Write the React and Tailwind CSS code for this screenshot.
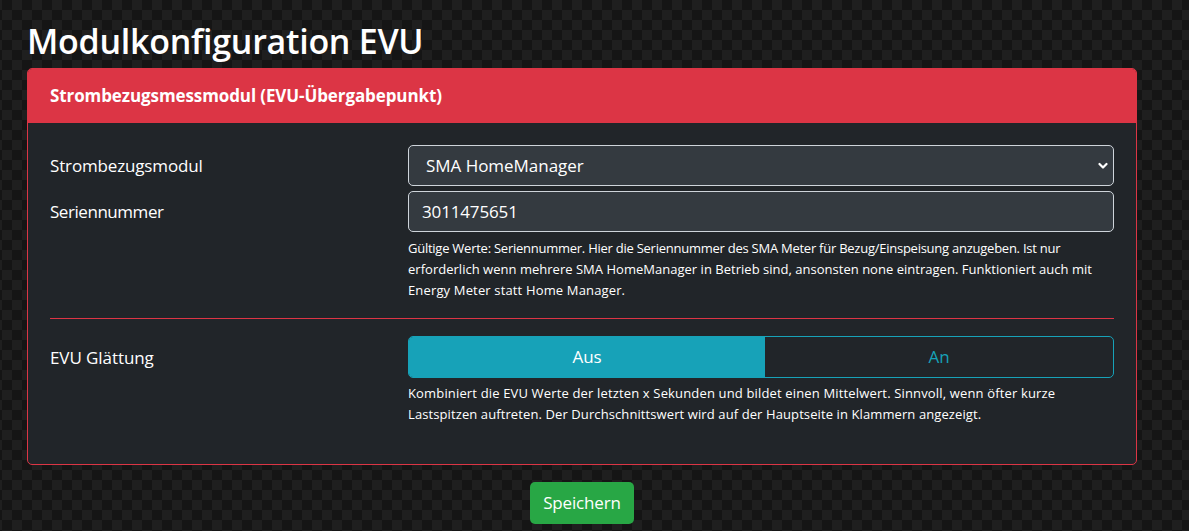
const FONT = "font-['Open_Sans','Noto_Sans',sans-serif]"

function Help({ lines, className }) {
  return (
    <p className={`text-[13px] leading-[21px] text-white ${className}`}>
      {lines.map(([text, cls]) => <span key={text} className={`block whitespace-nowrap ${cls}`}>{text}</span>)}
    </p>
  )
}

export default function App() {
  return (
    <div className={`${FONT} h-[531px] overflow-hidden bg-[conic-gradient(#151515_25%,#1f1f1f_0_50%,#151515_0_75%,#1f1f1f_0)] bg-[length:20px_20px] bg-[position:12px_0] px-[27px] text-white`}>
      <h1 className="pt-[19px] text-[34px] font-semibold leading-[45px] tracking-[-0.27px]">Modulkonfiguration EVU</h1>
      <section className="mt-[4px] w-[1110px] overflow-hidden rounded-[5px] border border-[#dc3545] bg-[#212529]">
        <header className="flex h-[54px] items-center bg-[#dc3545] px-[22px] text-[17px] font-bold tracking-[-0.1px]">
          Strombezugsmessmodul (EVU-Übergabepunkt)
        </header>
        <div className="px-[22px] pt-[22px] pb-[39px]">
          <div className="grid grid-cols-[358px_706px] gap-y-[5px] text-[17px] tracking-[-0.15px]">
            <label className="self-center">Strombezugsmodul</label>
            <div className="flex h-[41px] items-center justify-between rounded-[5px] border border-[#ced4da] bg-[#343a40] pr-[5px] pl-[17px]">
              <span className="tracking-[-0.03px]">SMA HomeManager</span>
              <svg width="10" height="8" viewBox="0 0 10 8" fill="none" stroke="white" strokeWidth="2.2" strokeLinecap="round" strokeLinejoin="round"><path d="M1.5 2l3.5 3.5L8.5 2" /></svg>
            </div>
            <label className="pt-[8px] tracking-[-0.45px]">Seriennummer</label>
            <div>
              <div className="flex h-[41px] items-center rounded-[5px] border border-[#ced4da] bg-[#343a40] px-[13px]">3011475651</div>
              <Help className="mt-[6px]" lines={[
                ['Gültige Werte: Seriennummer. Hier die Seriennummer des SMA Meter für Bezug/Einspeisung anzugeben. Ist nur', 'tracking-[-0.25px]'],
                ['erforderlich wenn mehrere SMA HomeManager in Betrieb sind, ansonsten none eintragen. Funktioniert auch mit', 'tracking-[0.02px]'],
                ['Energy Meter statt Home Manager.', 'tracking-[0.15px]'],
              ]} />
            </div>
          </div>
          <hr className="mt-[17px] mb-[17px] border-t border-[#dc3545]" />
          <div className="grid grid-cols-[358px_706px] text-[17px] tracking-[-0.15px]">
            <label className="pt-[9px] tracking-[-0.08px]">EVU Glättung</label>
            <div>
              <div className="flex h-[42px] overflow-hidden rounded-[5px] border border-[#17a2b8]">
                <div className="flex w-[356px] items-center justify-center bg-[#17a2b8]">Aus</div>
                <div className="flex flex-1 items-center justify-center text-[#17a2b8]">An</div>
              </div>
              <Help className="mt-[5px]" lines={[
                ['Kombiniert die EVU Werte der letzten x Sekunden und bildet einen Mittelwert. Sinnvoll, wenn öfter kurze', 'tracking-[0.155px]'],
                ['Lastspitzen auftreten. Der Durchschnittswert wird auf der Hauptseite in Klammern angezeigt.', 'tracking-[0.1px]'],
              ]} />
            </div>
          </div>
        </div>
      </section>
      <div className="mt-[17px] flex w-[1110px] justify-center">
        <button className="h-[42px] w-[104px] rounded-[5px] bg-[#28a745] text-[17px] tracking-[-0.15px] text-white">Speichern</button>
      </div>
    </div>
  )
}
